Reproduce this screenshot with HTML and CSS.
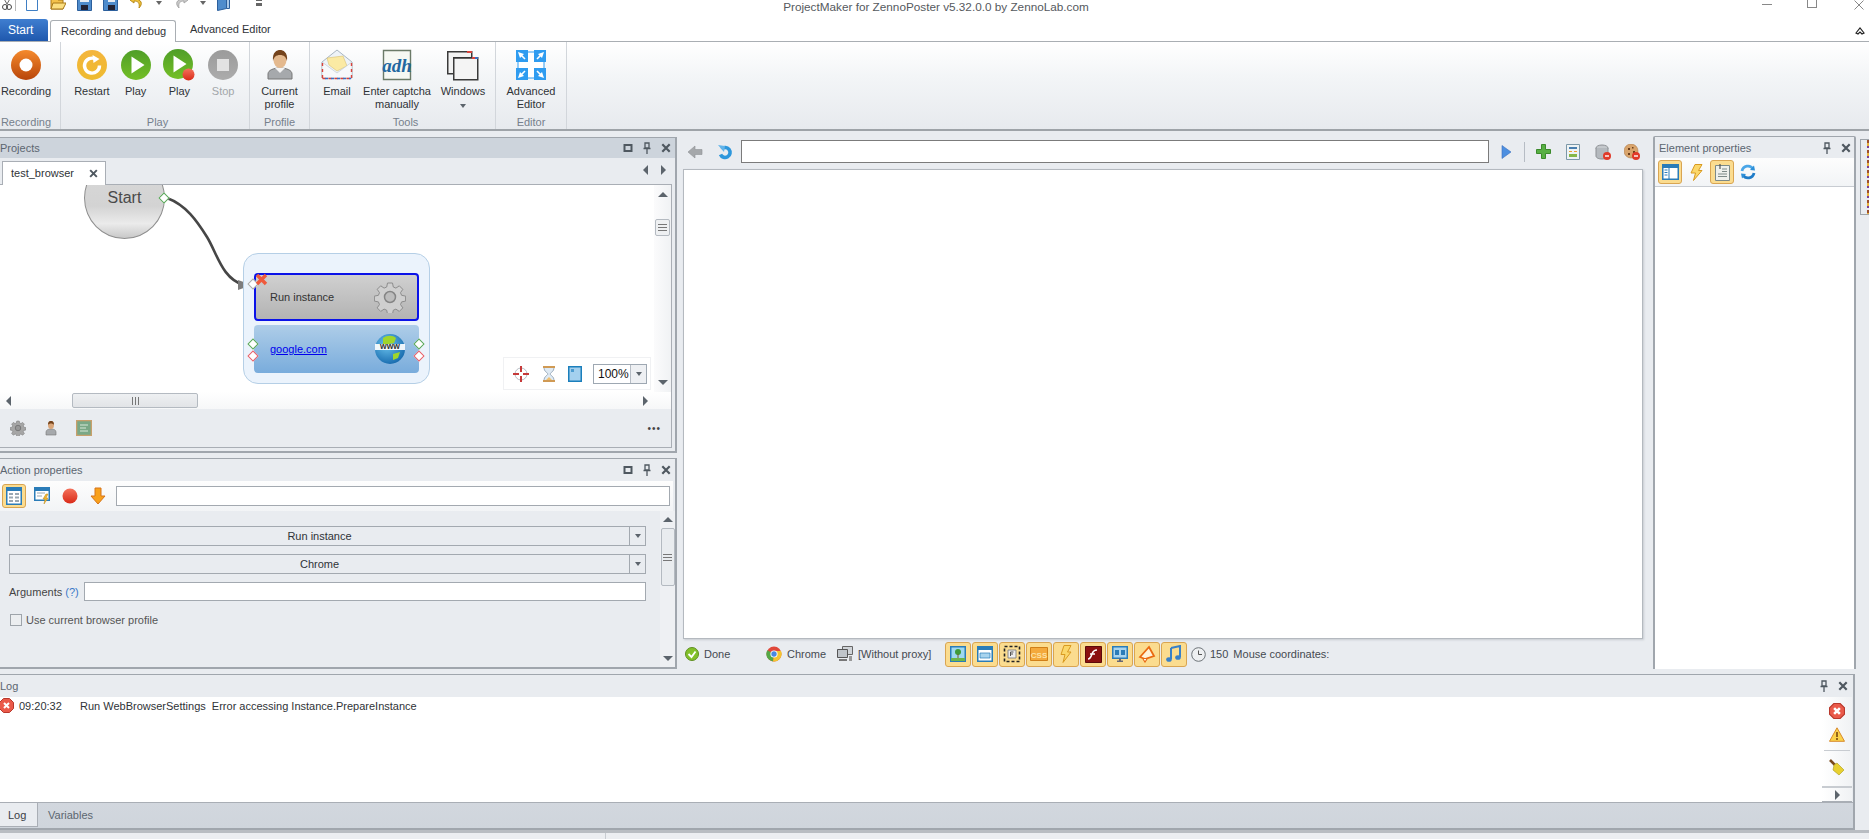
FILE: index.html
```html
<!DOCTYPE html>
<html lang="en">
<head>
    <meta charset="UTF-8">
    <meta name="viewport" content="width=device-width, initial-scale=1.0">
    <title>ProjectMaker for ZennoPoster</title>
    <link rel="stylesheet" href="styles.css">
</head>
<body>

<svg class="defs" width="0" height="0">
    <defs>
        <linearGradient id="gOrange" x1="0" y1="0" x2="0" y2="1"><stop offset="0" stop-color="#f58a2c"/><stop offset="1" stop-color="#b8450a"/></linearGradient>
        <linearGradient id="gYellow" x1="0" y1="0" x2="0" y2="1"><stop offset="0" stop-color="#f4b53c"/><stop offset="1" stop-color="#eebb30"/></linearGradient>
        <linearGradient id="gGreen" x1="0" y1="0" x2="0" y2="1"><stop offset="0" stop-color="#4f9e28"/><stop offset="1" stop-color="#74bf26"/></linearGradient>
        <linearGradient id="gGray" x1="0" y1="0" x2="0" y2="1"><stop offset="0" stop-color="#9b9b9b"/><stop offset="1" stop-color="#acacac"/></linearGradient>
        <radialGradient id="gGlobe" cx=".4" cy=".35" r=".75"><stop offset="0" stop-color="#6cc4ee"/><stop offset="1" stop-color="#0f62a8"/></radialGradient>
        <linearGradient id="gRed" x1="0" y1="0" x2="0" y2="1"><stop offset="0" stop-color="#f4725c"/><stop offset="1" stop-color="#d92a18"/></linearGradient>

        <symbol id="iMax" viewBox="0 0 10 10"><path d="M1.5 2h7v6h-7z" fill="none" stroke="#4f5860" stroke-width="2"/></symbol>
        <symbol id="iPin" viewBox="0 0 10 12"><path d="M3 1h4v5H3zM1.5 6.5h7M5 7v5" fill="none" stroke="#4f5860" stroke-width="1.3"/></symbol>
        <symbol id="iClose" viewBox="0 0 10 10"><path d="M1.3 1.3l7.4 7.4M8.7 1.3L1.3 8.7" fill="none" stroke="#4f5860" stroke-width="2.2"/></symbol>
        <symbol id="iGear" viewBox="0 0 32 32">
            <path d="M13.5 2h5l.8 4 2.6 1.1 3.4-2.3 3.5 3.5-2.3 3.4 1.1 2.6 4 .8v5l-4 .8-1.1 2.6 2.3 3.4-3.5 3.5-3.4-2.3-2.6 1.1-.8 4h-5l-.8-4-2.6-1.1-3.4 2.3-3.5-3.5 2.3-3.4-1.1-2.6-4-.8v-5l4-.8 1.1-2.6-2.3-3.4 3.5-3.5 3.4 2.3 2.6-1.1z" fill="#cfcfcf" stroke="#8d8d8d"/>
            <circle cx="16" cy="16" r="5.5" fill="#bdbdbd" stroke="#858585" stroke-width="1.5"/>
        </symbol>
    </defs>
</svg>

<header class="titlebar">
    <div class="quick">
        <svg class="q q-first" width="12" height="14" viewBox="0 0 12 14"><path d="M2 1l4 7M10 1L6 8" stroke="#666" fill="none"/><circle cx="4" cy="11" r="2.5" fill="none" stroke="#444"/><circle cx="8" cy="11" r="2.5" fill="none" stroke="#444"/></svg>
        <span class="q-sep"></span>
        <svg class="q" width="14" height="16" viewBox="0 0 14 16"><path d="M1.5.5h7l4 4v11h-11z" fill="#fff" stroke="#3f7fc4"/></svg>
        <svg class="q" width="16" height="16" viewBox="0 0 16 16"><path d="M1 3h6l1 2h5v9H1z" fill="#f3c14a" stroke="#a87818"/><path d="M3 8h13l-3 6H1z" fill="#fbdf80" stroke="#a87818"/></svg>
        <svg class="q" width="15" height="16" viewBox="0 0 15 16"><path d="M.5.5h14v15H.5z" fill="#4f8ccc" stroke="#2c5f9c"/><path d="M3 1h9v6H3z" fill="#e8eef5"/><path d="M4 10h7v5H4z" fill="#223"/></svg>
        <svg class="q" width="15" height="16" viewBox="0 0 15 16"><path d="M.5.5h14v15H.5z" fill="#4f8ccc" stroke="#2c5f9c"/><path d="M5 1h7v6H5z" fill="#e8eef5"/><path d="M5 10h7v5H5z" fill="#223"/></svg>
        <svg class="q" width="16" height="16" viewBox="0 0 16 16"><path d="M5 1L1 5l4 3V6c4 0 6 2 5 7 4-4 3-9-5-9z" fill="#f0c23a" stroke="#b88a1a"/></svg>
        <span class="caret q-caret"></span>
        <svg class="q" width="16" height="16" viewBox="0 0 16 16"><path d="M11 1l4 4-4 3V6C7 6 5 8 6 13 2 9 3 4 11 4z" fill="#c9c9c9" stroke="#a9a9a9"/></svg>
        <span class="caret q-caret"></span>
        <svg class="q q-copy" width="14" height="16" viewBox="0 0 14 16"><path d="M.5 2.5l9-2v13l-9 2z" fill="#4f8ccc" stroke="#2c5f9c"/><path d="M9.5 1.5h3v12h-3z" fill="#a9c8e8" stroke="#2c5f9c"/></svg>
        <span class="q-menu"></span>
    </div>
    <div class="title">ProjectMaker for ZennoPoster v5.32.0.0 by ZennoLab.com</div>
    <div class="winbtns">
        <span class="w-min"></span>
        <span class="w-max"></span>
        <svg width="10" height="10" viewBox="0 0 10 10"><path d="M.5.5l9 9M9.5.5l-9 9" stroke="#888" fill="none"/></svg>
    </div>
</header>

<nav class="ribbon-tabs">
    <div class="tab-start">Start</div>
    <div class="tab-on">Recording and debug</div>
    <div class="tab-off">Advanced Editor</div>
    <svg class="collapse" width="10" height="8" viewBox="0 0 10 8"><path d="M1 6l4-5 4 5-2 1-2-2-2 2z" fill="none" stroke="#222" stroke-width="1.2"/></svg>
</nav>

<section class="ribbon">
    <div class="rb-group g-rec">
        <div class="rb-items">
            <div class="rb-item w-53">
                <svg width="32" height="32" viewBox="0 0 32 32"><circle cx="16" cy="16" r="15" fill="url(#gOrange)"/><circle cx="16" cy="16" r="6.5" fill="#fff"/></svg>
                <span>Recording</span>
            </div>
        </div>
        <div class="rb-label">Recording</div>
    </div>
    <div class="rb-group g-play">
        <div class="rb-items">
            <div class="rb-item w-44">
                <svg width="32" height="32" viewBox="0 0 32 32"><circle cx="16" cy="16" r="15" fill="url(#gYellow)"/><path d="M19.5 10a7.5 7.5 0 1 0 4 6.5" fill="none" stroke="#fff" stroke-width="3.4"/><path d="M16.5 6l7 4-6 4z" fill="#fff"/></svg>
                <span>Restart</span>
            </div>
            <div class="rb-item w-44">
                <svg width="32" height="32" viewBox="0 0 32 32"><circle cx="16" cy="16" r="15" fill="url(#gGreen)"/><path d="M11.5 7.5l13 8.5-13 8.5z" fill="#fff"/></svg>
                <span>Play</span>
            </div>
            <div class="rb-item w-44">
                <svg width="32" height="32" viewBox="0 0 32 32"><circle cx="15" cy="15" r="15" fill="url(#gGreen)"/><path d="M10.5 6.5l13 8.5-13 8.5z" fill="#fff"/><circle cx="25.5" cy="25.5" r="6" fill="url(#gRed)"/></svg>
                <span>Play</span>
            </div>
            <div class="rb-item w-44 disabled">
                <svg width="32" height="32" viewBox="0 0 32 32"><circle cx="16" cy="16" r="15" fill="url(#gGray)"/><path d="M10 10h12v12H10z" fill="#e2e2e2"/></svg>
                <span>Stop</span>
            </div>
        </div>
        <div class="rb-label">Play</div>
    </div>
    <div class="rb-group g-profile">
        <div class="rb-items">
            <div class="rb-item w-60">
                <svg width="32" height="32" viewBox="0 0 32 32"><path d="M4 30v-5c0-4 6-6 12-6s12 2 12 6v5z" fill="#a6a9ac" stroke="#777"/><path d="M11 19l5 5 5-5z" fill="#f4f4f4"/><ellipse cx="16" cy="11" rx="6.5" ry="8" fill="#e4b98e"/><path d="M9 12C8 3 13 1 16 1s8 2 7 11c-1-4-3-6-7-6s-6 2-7 6z" fill="#74431c"/></svg>
                <span>Current<br>profile</span>
            </div>
        </div>
        <div class="rb-label">Profile</div>
    </div>
    <div class="rb-group g-tools">
        <div class="rb-items">
            <div class="rb-item w-42">
                <svg width="32" height="32" viewBox="0 0 32 32"><path d="M1 13L16 1l15 12v16H1z" fill="#eef3f8" stroke="#a9b6c2"/><path d="M6 9l16-2 4 10-10 5-8-6z" fill="#fbeaa4" stroke="#d8c070" stroke-width=".6"/><path d="M1 13l15 11 15-11v16H1z" fill="#f7f9fb" stroke="#b9c4ce" stroke-width=".6"/><path d="M1.5 29.5h29M1.5 14v15M30.5 14v15" stroke="#d9433c" stroke-width="1.4" stroke-dasharray="3 3" fill="none"/><path d="M4 29.5h26" stroke="#3d6fc0" stroke-width="1.4" stroke-dasharray="3 3" fill="none"/></svg>
                <span>Email</span>
            </div>
            <div class="rb-item w-78">
                <svg width="32" height="32" viewBox="0 0 32 32"><path d="M2.5 1.5h27v29h-27z" fill="#f6f8f3" stroke="#6b7a68" stroke-width="1.4"/><text x="16" y="23" class="captcha-text">adh</text></svg>
                <span>Enter captcha<br>manually</span>
            </div>
            <div class="rb-item w-54">
                <svg width="32" height="32" viewBox="0 0 32 32"><path d="M.75 2.75h24v22h-24z" fill="#f2f2f2" stroke="#3a3a3a" stroke-width="1.5"/><path d="M20 2h5v2h-5z" fill="#d9433c"/><path d="M6.75 8.75h24v22h-24z" fill="#f4f4f4" stroke="#3a3a3a" stroke-width="1.5"/><path d="M6 8h25v1.5H6z" fill="#333"/><path d="M25 8h3v2h-3z" fill="#d9433c"/><path d="M28 8h3v2h-3z" fill="#3d6fc0"/></svg>
                <span>Windows<i class="caret"></i></span>
            </div>
        </div>
        <div class="rb-label">Tools</div>
    </div>
    <div class="rb-group g-editor">
        <div class="rb-items">
            <div class="rb-item w-71">
                <svg width="32" height="32" viewBox="0 0 32 32"><path d="M3 3h26v26H3z" fill="#fff" stroke="#2f9cf0"/><path d="M1 1h12v12H1zM19 1h12v12H19zM1 19h12v12H1zM19 19h12v12H19z" fill="#2f9cf0"/><path d="M3 3l6 2-4 4zM29 3l-2 6-4-4zM3 29l2-6 4 4zM29 29l-6-2 4-4z" fill="#fff"/><path d="M6 6l4 4M26 6l-4 4M6 26l4-4M26 26l-4-4" stroke="#fff" stroke-width="1.6"/></svg>
                <span>Advanced<br>Editor</span>
            </div>
        </div>
        <div class="rb-label">Editor</div>
    </div>
</section>

<main class="workspace">
    <div class="left-col">
        <section class="panel projects">
            <div class="panel-head active">
                <span class="panel-name">Projects</span>
                <svg width="10" height="10"><use href="#iMax"/></svg>
                <svg width="10" height="12"><use href="#iPin"/></svg>
                <svg width="10" height="10"><use href="#iClose"/></svg>
            </div>
            <div class="doc-tabs">
                <div class="doc-tab">test_browser <svg width="9" height="9"><use href="#iClose"/></svg></div>
                <div class="doc-nav"><span class="arr-left"></span><span class="arr-right"></span></div>
            </div>
            <div class="canvas-wrap">
                <div class="canvas-row">
                    <div class="canvas">
                        <div class="start-node">Start</div>
                        <svg class="wire" width="654" height="207" viewBox="0 0 654 207">
                            <path d="M167 13C186 20 197 36 207 52S222 94 244 100" fill="none" stroke="#464646" stroke-width="2.6"/>
                            <path d="M238 95l14 5-14 5z" fill="#7d7d7d"/>
                        </svg>
                        <span class="port green p-start"></span>
                        <div class="group-node">
                            <div class="node run">
                                <span>Run instance</span>
                                <svg width="32" height="32"><use href="#iGear"/></svg>
                            </div>
                            <div class="node web">
                                <a class="web-link">google.com</a>
                                <svg width="32" height="32" viewBox="0 0 32 32"><circle cx="16" cy="16" r="15" fill="url(#gGlobe)"/><path d="M9 5c4-3 10-3 13 0l-2 5-5 1-2 4-4-2zM19 21l7-2-2 6-5 2z" fill="#9fd62c"/><path d="M1 11h30v6H1z" fill="#fff" opacity=".92"/><text x="16" y="16.4" class="www">www</text></svg>
                            </div>
                            <span class="port white p-in"></span>
                            <svg class="err-x" width="13" height="13" viewBox="0 0 13 13"><path d="M2 2l9 9M11 2l-9 9" stroke="#ef5a3c" stroke-width="3.4"/></svg>
                            <span class="port green p-gl"></span>
                            <span class="port red p-rl"></span>
                            <span class="port green p-gr"></span>
                            <span class="port red p-rr"></span>
                        </div>
                        <div class="zoombar">
                            <svg width="18" height="18" viewBox="0 0 18 18"><circle cx="9" cy="9" r="6" fill="none" stroke="#b6bcc4"/><path d="M9 1v6M9 11v6M1 9h6M11 9h6" stroke="#c63a3a" stroke-width="2"/></svg>
                            <svg width="14" height="18" viewBox="0 0 14 18"><path d="M2 2h10c0 5-3 5-4 7 1 2 4 2 4 7H2c0-5 3-5 4-7-1-2-4-2-4-7z" fill="#dfeaf4" stroke="#9ab"/><path d="M1 1h12v2H1zM1 15h12v2H1z" fill="#d09a54"/><path d="M4 15l3-3 3 3z" fill="#f0c070"/></svg>
                            <svg width="14" height="16" viewBox="0 0 14 16"><path d="M.75.75h12.5v14.5H.75z" fill="#a4d0ee" stroke="#1b7fbc" stroke-width="1.5"/><path d="M3 3h3v3H3z" fill="#4d9cd0"/></svg>
                            <div class="zoom-select"><span>100%</span><b><i class="caret"></i></b></div>
                        </div>
                    </div>
                    <div class="vscroll">
                        <span class="arr-up"></span>
                        <div class="vthumb"><i></i></div>
                        <span class="arr-down"></span>
                    </div>
                </div>
                <div class="hscroll">
                    <span class="arr-left"></span>
                    <div class="hthumb"><i></i></div>
                    <span class="arr-right"></span>
                </div>
                <div class="proj-foot">
                    <svg class="foot-gear" width="16" height="16"><use href="#iGear"/></svg>
                    <svg width="14" height="16" viewBox="0 0 14 16"><path d="M2 15v-3c0-2 2-3 5-3s5 1 5 3v3z" fill="#a6a9ac" stroke="#777" stroke-width=".6"/><ellipse cx="7" cy="5" rx="3" ry="4" fill="#d9a67a"/><path d="M4 5c0-4 2-4 3-4s3 0 3 4c-1-2-5-2-6 0z" fill="#74431c"/></svg>
                    <svg width="16" height="16" viewBox="0 0 16 16"><path d="M.5.5h15v15H.5z" fill="#7aa886" stroke="#c8a06c" stroke-width="1.6"/><path d="M4 5h8M4 8h6M4 11h8" stroke="#d8e8d8"/></svg>
                    <span class="dots">•••</span>
                </div>
            </div>
        </section>

        <section class="panel action">
            <div class="panel-head">
                <span class="panel-name">Action properties</span>
                <svg width="10" height="10"><use href="#iMax"/></svg>
                <svg width="10" height="12"><use href="#iPin"/></svg>
                <svg width="10" height="10"><use href="#iClose"/></svg>
            </div>
            <div class="tool-strip">
                <div class="tbtn on">
                    <svg width="16" height="18" viewBox="0 0 16 18"><path d="M.75.75h14.5v16.5H.75z" fill="#fff" stroke="#2a7cb8" stroke-width="1.5"/><path d="M1 1h14v3H1z" fill="#2a7cb8"/><path d="M3 6h4v2H3zM9 6h4v2H9zM3 9.500h4v2H3zM9 9.500h4v2H9zM3 13h4v2H3zM9 13h4v2H9z" fill="#9aa7b2"/></svg>
                </div>
                <div class="tbtn">
                    <svg width="16" height="18" viewBox="0 0 16 18"><path d="M.75.75h14.500v12.500H.75z" fill="#fff" stroke="#2a7cb8" stroke-width="1.5"/><path d="M1 1h14v3H1z" fill="#2a7cb8"/><path d="M3 6h8M3 9h5" stroke="#9aa7b2"/><path d="M12 7l-3 5h2l-1 5 4-6h-2l2-4z" fill="#f2b52e" stroke="#b88a1a" stroke-width=".5"/></svg>
                </div>
                <div class="tbtn">
                    <svg width="16" height="16" viewBox="0 0 16 16"><circle cx="8" cy="8" r="7.500" fill="url(#gRed)"/></svg>
                </div>
                <div class="tbtn">
                    <svg width="16" height="18" viewBox="0 0 16 18"><path d="M5 1h6v8h4l-7 8-7-8h4z" fill="#f8a11c" stroke="#d6741a"/></svg>
                </div>
                <input class="field filter" type="text">
            </div>
            <div class="action-body">
                <div class="action-form">
                    <div class="combo"><span>Run instance</span><b><i class="caret"></i></b></div>
                    <div class="combo"><span>Chrome</span><b><i class="caret"></i></b></div>
                    <div class="arg-row">
                        <label>Arguments <a class="help">(?)</a></label>
                        <input class="field" type="text">
                    </div>
                    <label class="check"><i></i>Use current browser profile</label>
                </div>
                <div class="vscroll light">
                    <span class="arr-up"></span>
                    <div class="vthumb long"><i></i></div>
                    <span class="arr-down"></span>
                </div>
            </div>
        </section>
    </div>

    <div class="center-col">
        <div class="browser-bar">
            <svg class="b-back" width="16" height="14" viewBox="0 0 16 14"><path d="M8 1L1 7l7 6V9.500h7v-5H8z" fill="#a5a8ab" stroke="#8f9295" stroke-width=".6"/></svg>
            <svg class="b-reload" width="16" height="17" viewBox="0 0 16 17"><path d="M4.500 6a5 5 0 1 1-1 5.500" fill="none" stroke="#2d97dc" stroke-width="3.600"/><path d="M1 2l7 1-1 6z" fill="#62b4ea"/></svg>
            <input class="field url" type="text">
            <svg class="b-go" width="11" height="14" viewBox="0 0 11 14"><path d="M1 .5l9 6.500-9 6.500z" fill="#4d8fe0" stroke="#3a70c0" stroke-width=".6"/></svg>
            <span class="b-sep"></span>
            <svg class="b-plus" width="15" height="15" viewBox="0 0 15 15"><path d="M5.500.5h4v5h5v4h-5v5h-4v-5h-5v-4h5z" fill="#58b044" stroke="#3c8a2c"/></svg>
            <svg class="b-form" width="14" height="16" viewBox="0 0 14 16"><path d="M.5.5h13v15H.5z" fill="#eef3f4" stroke="#7c98a8"/><path d="M3 3h8v2H3z" fill="#4a7fb0"/><path d="M3 7h3v1H3zM8 7h3v1H8z" fill="#f0a030"/><path d="M3 10h8v3H3z" fill="#86b848"/></svg>
            <svg class="b-db" width="16" height="16" viewBox="0 0 16 16"><ellipse cx="7" cy="4" rx="6" ry="3" fill="#c4c8cc" stroke="#8c9094"/><path d="M1 4v8c0 2 3 3 6 3s6-1 6-3V4" fill="#b4b9be" stroke="#8c9094"/><circle cx="12" cy="12" r="4" fill="#e03a2a"/><path d="M10 12h4" stroke="#fff" stroke-width="1.400"/></svg>
            <svg class="b-cookie" width="16" height="16" viewBox="0 0 16 16"><circle cx="7" cy="7" r="7" fill="#d8a46c" stroke="#b07c48" stroke-width=".6"/><path d="M4 4h2v2H4zM8 3h1.500v1.500H8zM9 7h2v2H9zM4 9h2v2H4z" fill="#6b3f1c"/><circle cx="12" cy="12" r="4" fill="#e03a2a"/><path d="M10 12h4" stroke="#fff" stroke-width="1.400"/></svg>
        </div>
        <div class="browser-view"></div>
        <div class="status">
            <div class="st st-done">
                <svg width="14" height="14" viewBox="0 0 14 14"><circle cx="7" cy="7" r="6.500" fill="#82c02a" stroke="#5f8f20"/><path d="M3.500 7l3 3 4-5.500" fill="none" stroke="#fff" stroke-width="1.800"/></svg>
                <span>Done</span>
            </div>
            <div class="st st-chrome">
                <svg width="16" height="16" viewBox="0 0 16 16"><circle cx="8" cy="8" r="7.500" fill="#e0483a"/><path d="M8 8L1.300 4.200A7.500 7.500 0 0 0 7 15.400z" fill="#54a846"/><path d="M8 8l-1 7.400A7.500 7.500 0 0 0 15 5H8z" fill="#f4c430"/><circle cx="8" cy="8" r="3.600" fill="#fff"/><circle cx="8" cy="8" r="2.700" fill="#4a88e0"/></svg>
                <span>Chrome</span>
            </div>
            <div class="st st-proxy">
                <svg width="16" height="16" viewBox="0 0 16 16"><path d="M5.500.5h10v8h-10z" fill="#d0d4d8" stroke="#666"/><path d="M.5 3.500h10v8h-10z" fill="#bfc4c9" stroke="#555"/><path d="M2 13h8v2H2z" fill="#777"/><path d="M12 10h3v5h-3z" fill="#999"/></svg>
                <span>[Without proxy]</span>
            </div>
            <div class="st-btns">
                <div class="sbtn"><svg width="16" height="16" viewBox="0 0 16 16"><path d="M.75.75h14.500v14.500H.75z" fill="#9ed8f0" stroke="#2a7cb8" stroke-width="1.500"/><path d="M1 12l14 0v3H1z" fill="#6db64a"/><circle cx="8" cy="6" r="3" fill="#3f9a38"/><path d="M7.500 8h1v4h-1z" fill="#7a5a28"/></svg></div>
                <div class="sbtn"><svg width="16" height="16" viewBox="0 0 16 16"><path d="M.75.75h14.500v14.500H.75z" fill="#fff" stroke="#2a7cb8" stroke-width="1.500"/><path d="M1 1h14v3H1z" fill="#2a7cb8"/><path d="M3 7h10v5H3z" fill="#a9d4ee" stroke="#2a7cb8" stroke-width=".7"/></svg></div>
                <div class="sbtn"><svg width="18" height="18" viewBox="0 0 18 18"><path d="M1.500 1.500h15v15h-15z" fill="none" stroke="#222" stroke-width="1.600" stroke-dasharray="3 2"/><path d="M5 5h8v8H5z" fill="#eee" stroke="#888"/><path d="M7.500 7v4M7.500 7h3M7.500 9h2.500" stroke="#555"/></svg></div>
                <div class="sbtn"><svg width="18" height="14" viewBox="0 0 18 14"><path d="M.5.500h17v13H.5z" fill="#f4a93c" stroke="#d07f18"/><text x="9" y="10.500" class="css-text">CSS</text></svg></div>
                <div class="sbtn"><svg width="12" height="18" viewBox="0 0 12 18"><path d="M4 .5h7L7.500 7H11L3 17.500 5 9.500H1z" fill="#fbd76a" stroke="#d99a20"/></svg></div>
                <div class="sbtn"><svg width="17" height="17" viewBox="0 0 17 17"><path d="M.5.500h16v16H.5z" fill="#8a1010" stroke="#5c0a0a"/><path d="M12 4c-3 0-4 1-5 4s-2 5-4 5M5 8h5" fill="none" stroke="#fff" stroke-width="1.600"/></svg></div>
                <div class="sbtn"><svg width="16" height="17" viewBox="0 0 16 17"><path d="M.75.750h14.500v11.500H.75z" fill="#a9d4ee" stroke="#2a7cb8" stroke-width="1.500"/><path d="M3 4h4v5H3zM9 4h4v5H9z" fill="#2a7cb8"/><path d="M7 12.500h2v2h2v1.500H5v-1.500h2z" fill="#667"/></svg></div>
                <div class="sbtn"><svg width="18" height="18" viewBox="0 0 18 18"><path d="M2 12L11 2l5 9-9 3z" fill="#fff3d8" stroke="#ea6a10" stroke-width="1.800"/><path d="M5 14l2 3 2-3" fill="#fff" stroke="#ea6a10" stroke-width="1.200"/></svg></div>
                <div class="sbtn"><svg width="16" height="18" viewBox="0 0 16 18"><path d="M5 3l9-2v11" fill="none" stroke="#3880c8" stroke-width="2"/><path d="M5 3v11" stroke="#3880c8" stroke-width="2"/><ellipse cx="3" cy="14.500" rx="2.800" ry="2.300" fill="#3880c8"/><ellipse cx="12" cy="12.500" rx="2.800" ry="2.300" fill="#3880c8"/></svg></div>
            </div>
            <svg class="clock" width="15" height="15" viewBox="0 0 15 15"><circle cx="7.500" cy="7.500" r="6.800" fill="#eef0f2" stroke="#6d7378"/><path d="M7.500 3.500v4h3.500" fill="none" stroke="#555"/></svg>
            <span class="st-num">150</span>
            <span class="st-mouse">Mouse coordinates:</span>
        </div>
    </div>

    <section class="panel element">
        <div class="panel-head">
            <span class="panel-name">Element properties</span>
            <svg width="10" height="12"><use href="#iPin"/></svg>
            <svg width="10" height="10"><use href="#iClose"/></svg>
        </div>
        <div class="tool-strip el">
            <div class="tbtn on"><svg width="17" height="16" viewBox="0 0 17 16"><path d="M.75.750h15.500v14.500H.75z" fill="#fff" stroke="#2a7cb8" stroke-width="1.500"/><path d="M1 1h15v3H1z" fill="#2a7cb8"/><path d="M6.500 4h1v11h-1z" fill="#2a7cb8"/><path d="M2.500 6h3M2.500 8.500h3M2.500 11h3" stroke="#2a7cb8"/></svg></div>
            <div class="tbtn"><svg width="13" height="17" viewBox="0 0 13 17"><path d="M5 .5h7L8.500 6.500H12L3.500 16.500 5.500 9H1z" fill="#fbd76a" stroke="#d99a20"/></svg></div>
            <div class="tbtn on"><svg width="15" height="17" viewBox="0 0 15 17"><path d="M.5 1.500h14v15H.5z" fill="#eef0ec" stroke="#7c8a88"/><path d="M5 0v5" stroke="#555" stroke-width="1.200"/><path d="M7 5h5M7 7.500h5M3 10h9M3 12.500h9" stroke="#7c8a88"/></svg></div>
            <div class="tbtn"><svg width="16" height="16" viewBox="0 0 16 16"><path d="M2 7a6 6 0 0 1 11-2" fill="none" stroke="#4aa6e8" stroke-width="2.800"/><path d="M14 9a6 6 0 0 1-11 2" fill="none" stroke="#1f7cc8" stroke-width="2.800"/><path d="M10 6l5 .5-1-5zM6 10l-5-.5 1 5z" fill="#2d8fd8"/></svg></div>
        </div>
        <div class="el-body"></div>
    </section>

    <div class="side-tab"></div>
</main>

<section class="panel log">
    <div class="panel-head">
        <span class="panel-name">Log</span>
        <svg width="10" height="12"><use href="#iPin"/></svg>
        <svg width="10" height="10"><use href="#iClose"/></svg>
    </div>
    <div class="log-main">
        <div class="log-list">
            <div class="log-row">
                <svg width="15" height="15" viewBox="0 0 15 15"><path d="M4.500.5h6l4 4v6l-4 4h-6l-4-4v-6z" fill="#ea5a4a" stroke="#b8382c"/><path d="M5 5l5 5M10 5l-5 5" stroke="#fff" stroke-width="2"/></svg>
                <span class="log-time">09:20:32</span>
                <span>Run WebBrowserSettings&nbsp; Error accessing Instance.PrepareInstance</span>
            </div>
        </div>
        <div class="log-tools">
            <div class="log-icons">
                <svg width="16" height="16" viewBox="0 0 15 15"><path d="M4.500.5h6l4 4v6l-4 4h-6l-4-4v-6z" fill="#ea5a4a" stroke="#b8382c"/><path d="M4.800 4.800l5.400 5.400M10.200 4.800l-5.400 5.400" stroke="#fff" stroke-width="2.400"/></svg>
                <svg width="16" height="15" viewBox="0 0 16 15"><path d="M8 .8l7.500 13.500H.5z" fill="#fbd24a" stroke="#d88a2c"/><path d="M8 5v5M8 11v2" stroke="#7a4a10" stroke-width="1.600"/></svg>
                <span class="log-sep"></span>
                <svg width="16" height="17" viewBox="0 0 16 17"><path d="M1 1l5 5" stroke="#7a4a1c" stroke-width="2.600"/><path d="M5 6l3-2 7 7-5 5-6-5z" fill="#e8d030" stroke="#a89a18" stroke-width=".6"/></svg>
            </div>
            <div class="log-more"><span class="arr-right"></span></div>
        </div>
    </div>
    <div class="log-tabs">
        <div class="log-tab on">Log</div>
        <div class="log-tab">Variables</div>
    </div>
</section>

<footer class="statusbar"><span></span></footer>

</body>
</html>
```
FILE: styles.css
```css
* {
    box-sizing: border-box;
}
html, body {
    margin: 0;
    height: 839px;
    overflow: hidden;
}
body {
    width: 1869px;
    font-family: "Liberation Sans", Arial, sans-serif;
    font-size: 11px;
    color: #2f3337;
    background-color: #e9ecf0;
}
.defs {
    position: absolute;
}
svg {
    display: block;
    flex: none;
}
.caret {
    display: inline-block;
    width: 0;
    height: 0;
    border-left: 3.5px solid transparent;
    border-right: 3.5px solid transparent;
    border-top: 4px solid #5c646c;
}

/* title bar */
.titlebar {
    height: 18px;
    background-color: #fff;
    display: grid;
    grid-template-columns: 1fr auto 1fr;
    overflow: hidden;
}
.quick {
    display: flex;
    align-items: center;
    height: 14px;
    margin-top: -4px;
}
.q {
    margin-right: 11px;
}
.q-first {
    margin-left: 1px;
    margin-right: 2px;
}
.q-sep {
    width: 1px;
    height: 16px;
    background-color: #b9b9b9;
    margin: 0 9px 0 0;
}
.q-caret {
    margin: 0 11px 0 0;
    border-top-color: #666;
}
.q-copy {
    margin-right: 25px;
}
.q-menu {
    width: 6px;
    height: 6px;
    border-top: 1px solid #666;
    border-bottom: 3px solid #666;
}
.title {
    color: #55595e;
    font-size: 11.75px;
    line-height: 14px;
    padding: 0 0 0 3px;
}
.winbtns {
    display: flex;
    justify-content: flex-end;
    align-items: flex-start;
    padding-right: 5px;
}
.w-min {
    width: 10px;
    height: 1px;
    margin-top: 4px;
    margin-right: 35px;
    background-color: #888;
}
.w-max {
    width: 10px;
    height: 9px;
    margin-top: -1px;
    margin-right: 37px;
    border: 1px solid #888;
}

/* ribbon */
.ribbon-tabs {
    height: 24px;
    background-color: #fff;
    display: flex;
    align-items: flex-end;
    border-bottom: 1px solid #a9aeb3;
    position: relative;
}
.tab-start {
    width: 48px;
    height: 22px;
    padding: 4px 0 0 8px;
    font-size: 12px;
    color: #fff;
    background: linear-gradient(#3f7ed0, #1f58ad);
    border-radius: 0 3px 0 0;
}
.tab-on {
    width: 126px;
    height: 22px;
    margin-left: 2px;
    margin-bottom: -1px;
    padding: 4px 0 0 10px;
    background-color: #fff;
    border: 1px solid #a9aeb3;
    border-bottom: 0;
    border-radius: 3px 3px 0 0;
}
.tab-off {
    height: 22px;
    padding: 4px 0 0 14px;
}
.collapse {
    position: absolute;
    right: 4px;
    top: 9px;
}
.ribbon {
    height: 89px;
    display: flex;
    background: linear-gradient(#fff, #f3f5f7 40%, #e7eaee);
    border-bottom: 2px solid #9ea3a8;
}
.rb-group {
    display: flex;
    flex-direction: column;
    border-right: 1px solid #d2d6db;
    padding-top: 7px;
}
.g-rec { width: 61px; padding-right: 8px; }
.g-play { width: 189px; padding-left: 9px; padding-right: 4px; }
.g-profile { width: 60px; }
.g-tools { width: 186px; padding-left: 6px; }
.g-editor { width: 71px; }
.rb-items {
    display: flex;
    flex: 1;
}
.rb-item {
    display: flex;
    flex-direction: column;
    align-items: center;
    text-align: center;
    line-height: 13px;
}
.rb-item svg {
    margin-bottom: 4px;
}
.rb-item span {
    display: block;
    white-space: nowrap;
}
.rb-item .caret {
    display: block;
    margin: 6px auto 0;
}
.w-44 { width: 44px; }
.w-53 { width: 53px; }
.w-60 { width: 60px; }
.w-42 { width: 42px; }
.w-78 { width: 78px; }
.w-54 { width: 54px; }
.w-71 { width: 71px; }
.disabled {
    color: #a2a6aa;
}
.rb-label {
    text-align: center;
    color: #76808c;
    line-height: 13px;
    height: 13px;
}
.captcha-text {
    font-family: "Liberation Serif", serif;
    font-style: italic;
    font-weight: bold;
    font-size: 19px;
    text-anchor: middle;
    fill: #23679f;
}

/* panels */
.workspace {
    display: grid;
    grid-template-columns: 677px 976px 203px 13px;
    height: 532px;
    margin-top: 6px;
}
.left-col {
    display: flex;
    flex-direction: column;
    gap: 5px;
}
.panel {
    display: flex;
    flex-direction: column;
    border: 2px solid #a0a6ad;
    border-top-width: 1px;
    border-left: 0;
    background-color: #e9ecf0;
    min-height: 0;
}
.panel-head {
    height: 20px;
    flex: none;
    display: flex;
    align-items: center;
    gap: 9px;
    padding: 0 4px 0 0;
}
.panel-head.active {
    background-color: #cdd4dc;
}
.panel-name {
    flex: 1;
    color: #5c6670;
}
.projects {
    height: 316px;
    padding-right: 3px;
    padding-bottom: 3px;
}
.projects .panel-head {
    margin-right: -3px;
}
.doc-tabs {
    height: 26px;
    flex: none;
    display: flex;
    justify-content: space-between;
    align-items: flex-end;
    padding-left: 2px;
}
.doc-tab {
    width: 104px;
    height: 24px;
    margin-bottom: -1px;
    position: relative;
    z-index: 2;
    display: flex;
    justify-content: space-between;
    align-items: center;
    padding: 0 7px 1px 8px;
    background-color: #fff;
    border: 1px solid #a9aeb5;
    border-bottom: 0;
}
.doc-nav {
    display: flex;
    gap: 13px;
    padding: 0 6px 9px 0;
}
.arr-left, .arr-right, .arr-up, .arr-down {
    display: block;
    width: 0;
    height: 0;
    flex: none;
}
.arr-left {
    border-top: 5px solid transparent;
    border-bottom: 5px solid transparent;
    border-right: 5px solid #5c646c;
}
.arr-right {
    border-top: 5px solid transparent;
    border-bottom: 5px solid transparent;
    border-left: 5px solid #5c646c;
}
.arr-up {
    border-left: 5px solid transparent;
    border-right: 5px solid transparent;
    border-bottom: 5px solid #5c646c;
}
.arr-down {
    border-left: 5px solid transparent;
    border-right: 5px solid transparent;
    border-top: 5px solid #5c646c;
}
.canvas-wrap {
    flex: 1;
    display: flex;
    flex-direction: column;
    border-top: 1px solid #a9aeb5;
    border-bottom: 1px solid #a9aeb5;
    border-right: 1px solid #a9aeb5;
    min-height: 0;
}
.canvas-row {
    display: flex;
    height: 207px;
}
.canvas {
    width: 654px;
    position: relative;
    overflow: hidden;
    background-color: #fff;
}
.wire {
    position: absolute;
    left: 0;
    top: 0;
}
.start-node {
    position: absolute;
    left: 84px;
    top: -28px;
    width: 81px;
    height: 82px;
    padding-top: 31px;
    text-align: center;
    font-size: 16px;
    color: #4a4a4a;
    border: 1px solid #8e8e8e;
    border-radius: 50%;
    background: linear-gradient(#d9d9d9, #d3d3d3 60%, #ebebeb 82%, #c8c8c8);
}
.port {
    position: absolute;
    width: 8px;
    height: 8px;
    background-color: #fff;
    transform: rotate(45deg);
    border: 1px solid #5aa85a;
}
.port.red { border-color: #e8606a; }
.port.white { border-color: #a9a9a9; }
.p-start { left: 160px; top: 9px; }
.group-node {
    position: absolute;
    left: 243px;
    top: 68px;
    width: 187px;
    height: 131px;
    padding: 19px 10px 0;
    background-color: #ebf3fc;
    border: 1px solid #b5cfe6;
    border-radius: 15px;
}
.node {
    height: 48px;
    display: flex;
    align-items: center;
    justify-content: space-between;
    padding: 0 11px 0 14px;
    border-radius: 4px;
}
.node.run {
    border: 2px solid #0a12e8;
    background: linear-gradient(#d0d0d0, #b3b3b3);
    color: #333;
}
.node.web {
    margin-top: 4px;
    padding-left: 16px;
    padding-right: 13px;
    background: linear-gradient(#aecde8, #79acdc);
}
.web-link {
    color: #0000ee;
    text-decoration: underline;
}
.www {
    font-family: "Liberation Sans", Arial, sans-serif;
    font-weight: bold;
    font-size: 8.5px;
    text-anchor: middle;
    fill: #333;
}
.p-in { left: 5px; top: 26px; border-color: #bbb; }
.err-x { position: absolute; left: 11px; top: 19px; }
.p-gl { left: 5px; top: 86px; }
.p-rl { left: 5px; top: 98px; }
.p-gr { left: 171px; top: 86px; }
.p-rr { left: 171px; top: 98px; }
.zoombar {
    position: absolute;
    left: 503px;
    top: 172px;
    width: 148px;
    height: 33px;
    display: flex;
    align-items: center;
    gap: 12px;
    padding-left: 8px;
    background-color: #fff;
    border: 1px solid #f0f1f3;
}
.zoom-select {
    width: 54px;
    height: 20px;
    margin-left: -1px;
    display: flex;
    border: 1px solid #9ea8b2;
    color: #111;
    font-size: 12px;
    line-height: 18px;
    padding-left: 4px;
}
.zoom-select span {
    flex: 1;
}
.zoom-select b {
    width: 16px;
    display: flex;
    align-items: center;
    justify-content: center;
    border-left: 1px solid #b6bcc4;
    background-color: #eef0f3;
}
.vscroll {
    flex: 1;
    display: flex;
    flex-direction: column;
    align-items: center;
    background: linear-gradient(90deg, #fbfbfc, #f0f2f4);
    padding: 7px 0;
}
.vthumb {
    width: 15px;
    height: 17px;
    margin-top: 22px;
    margin-bottom: auto;
    display: flex;
    align-items: center;
    justify-content: center;
    border: 1px solid #b4bac1;
    border-radius: 2px;
    background-color: #eef0f2;
}
.vthumb i, .hthumb i {
    display: block;
    width: 9px;
    height: 7px;
    border-top: 1px solid #777;
    border-bottom: 1px solid #777;
    background: linear-gradient(transparent 2px, #777 2px, #777 3px, transparent 3px);
}
.hscroll {
    height: 17px;
    flex: none;
    display: flex;
    align-items: center;
    padding: 0 23px 0 6px;
    background: linear-gradient(#fff, #f6f7f8);
}
.hscroll .arr-right {
    margin-left: auto;
}
.hthumb {
    width: 126px;
    height: 15px;
    margin-left: 61px;
    display: flex;
    align-items: center;
    justify-content: center;
    border: 1px solid #b4bac1;
    border-radius: 2px;
    background: linear-gradient(#eef0f2, #e2e4e7);
}
.hthumb i {
    width: 7px;
    height: 8px;
    border: 0;
    border-left: 1px solid #777;
    border-right: 1px solid #777;
    background: linear-gradient(90deg, transparent 2px, #777 2px, #777 3px, transparent 3px);
}
.proj-foot {
    flex: 1;
    display: flex;
    align-items: center;
    gap: 18px;
    padding: 0 10px;
}
.foot-gear {
    filter: brightness(.8);
}
.dots {
    margin-left: auto;
    letter-spacing: 1px;
    color: #444;
    font-size: 10px;
}

.action {
    flex: 1;
}
.action .panel-head {
    height: 22px;
}
.tool-strip {
    height: 30px;
    flex: none;
    display: flex;
    align-items: center;
    margin-right: 2px;
    padding-left: 2px;
    background: linear-gradient(#fdfdfd, #f2f4f6);
}
.tbtn {
    width: 24px;
    height: 24px;
    display: flex;
    align-items: center;
    justify-content: center;
    flex: none;
    margin-right: 4px;
    border: 1px solid transparent;
    border-radius: 3px;
}
.tbtn.on {
    background-color: #fbdc8f;
    border-color: #d9a552;
}
.field {
    display: block;
    margin: 0;
    padding: 0;
    height: 20px;
    background-color: #fff;
    border: 1px solid #a3a9b0;
    border-radius: 0;
    outline: 0;
}
.filter {
    width: 554px;
    margin-left: 2px;
}
.action-body {
    flex: 1;
    display: flex;
    min-height: 0;
}
.action-form {
    width: 660px;
    padding: 15px 14px 0 9px;
    display: flex;
    flex-direction: column;
    gap: 8px;
}
.combo {
    height: 20px;
    display: flex;
    line-height: 18px;
    text-align: center;
    border: 1px solid #a3a9b0;
    background-color: #e9ecf0;
}
.combo span {
    flex: 1;
}
.combo b {
    width: 16px;
    display: flex;
    align-items: center;
    justify-content: center;
    border-left: 1px solid #a3a9b0;
    font-weight: normal;
}
.arg-row {
    display: flex;
    align-items: center;
    justify-content: space-between;
    color: #444;
}
.arg-row .field {
    width: 562px;
    height: 19px;
}
.help {
    color: #3a78c8;
}
.check {
    display: flex;
    align-items: center;
    gap: 4px;
    margin-top: 5px;
    color: #555;
}
.check i {
    display: block;
    width: 12px;
    height: 12px;
    margin-left: 1px;
    border: 1px solid #9ea4aa;
    background-color: #eceef0;
}
.vscroll.light {
    background: #eef0f3;
    flex: none;
    width: 15px;
    padding: 6px 0;
}
.vthumb.long {
    width: 14px;
    height: 58px;
    margin-top: 6px;
    background-color: #e9ecef;
}

/* center */
.center-col {
    display: flex;
    flex-direction: column;
    padding: 0 10px 0 6px;
}
.browser-bar {
    height: 32px;
    flex: none;
    display: flex;
    align-items: center;
    padding-bottom: 3px;
}
.b-back { margin-left: 4px; }
.b-reload { margin-left: 14px; }
.url {
    width: 748px;
    height: 23px;
    flex: none;
    margin-left: 8px;
    border-color: #7b7b7b;
}
.b-go { margin-left: 12px; }
.b-sep {
    width: 1px;
    height: 20px;
    flex: none;
    margin-left: 12px;
    background-color: #b6bcc4;
}
.b-plus { margin-left: 11px; }
.b-form { margin-left: 15px; }
.b-db { margin-left: 15px; }
.b-cookie { margin-left: 13px; }
.browser-view {
    flex: 1;
    background-color: #fff;
    border: 1px solid #b4b9bf;
    box-shadow: 1px 1px 2px #c6cad0;
}
.status {
    height: 30px;
    flex: none;
    display: flex;
    align-items: center;
    color: #454a50;
}
.st {
    display: flex;
    align-items: center;
    gap: 5px;
}
.st-done { width: 83px; padding-left: 2px; }
.st-chrome { width: 71px; }
.st-proxy { width: 108px; }
.st-btns {
    display: flex;
    gap: 1px;
}
.sbtn {
    width: 26px;
    height: 25px;
    display: flex;
    align-items: center;
    justify-content: center;
    background-color: #fbdc8f;
    border: 1px solid #d9a552;
    border-radius: 3px;
}
.css-text {
    font-family: "Liberation Sans", Arial, sans-serif;
    font-size: 8px;
    font-weight: bold;
    text-anchor: middle;
    fill: #fce3a8;
}
.clock { margin-left: 4px; }
.st-num { margin-left: 4px; }
.st-mouse { margin-left: 5px; }

/* element properties */
.element {
    border: 2px solid #a0a6ad;
    border-top-width: 1px;
    border-bottom: 0;
    border-radius: 2px 2px 0 0;
    height: 533px;
    margin-top: -1px;
}
.element .panel-head {
    height: 21px;
    padding-left: 4px;
    padding-right: 3px;
}
.tool-strip.el {
    height: 29px;
    margin-right: 0;
    padding-left: 3px;
    border-bottom: 1px solid #c8ccd2;
}
.tool-strip.el .tbtn {
    margin-right: 2px;
}
.el-body {
    flex: 1;
    background-color: #fff;
}
.side-tab {
    height: 76px;
    margin: 2px 0 0 4px;
    border: 1px solid #9ea4ab;
    border-right: 0;
    background:
        repeating-linear-gradient(#9b4e2c 0, #9b4e2c 3px, #e9b23a 3px, #e9b23a 6px, #7d3f96 6px, #7d3f96 8px, #e9ecf0 8px, #e9ecf0 10px) 6px 0 / 3px 100% no-repeat,
        #e9ecf0;
}

/* log */
.log {
    width: 1855px;
    height: 156px;
    margin-top: 5px;
}
.log .panel-head {
    height: 22px;
    padding-right: 5px;
}
.log-main {
    height: 105px;
    display: flex;
    margin-right: 1px;
    flex: none;
}
.log-list {
    flex: 1;
    background-color: #fff;
}
.log-row {
    display: flex;
    align-items: center;
    height: 17px;
}
.log-row svg {
    margin-left: -1px;
}
.log-time {
    width: 61px;
    margin-left: 5px;
}
.log-tools {
    width: 30px;
    display: flex;
    flex-direction: column;
    background: linear-gradient(90deg, #fff, #f0f2f4);
}
.log-icons {
    flex: 1;
    display: flex;
    flex-direction: column;
    align-items: center;
    padding-top: 6px;
    gap: 8px;
}
.log-sep {
    width: 26px;
    height: 1px;
    background-color: #c8ccd1;
}
.log-more {
    height: 16px;
    display: flex;
    align-items: center;
    justify-content: center;
    border-top: 2px solid #c8ccd1;
    border-bottom: 1px solid #a9aeb5;
}
.log-tabs {
    flex: 1;
    display: flex;
    background: linear-gradient(#d2d7de, #cfd5dc);
    border-top: 1px solid #a9aeb5;
}
.log-tab {
    padding: 6px 7px 0;
    height: 24px;
    color: #5c6670;
}
.log-tab.on {
    width: 38px;
    padding-left: 8px;
    background-color: #e9ecf0;
    color: #3b4046;
    border-right: 1px solid #a9aeb5;
    border-bottom: 1px solid #a9aeb5;
}
.log-tab + .log-tab {
    padding-left: 10px;
}

.statusbar {
    height: 9px;
    border-top: 3px solid #b9bdc2;
    background-color: #eceef1;
}
.statusbar span {
    display: block;
    margin-left: 605px;
    width: 1px;
    height: 6px;
    background-color: #c8ccd1;
}
```
